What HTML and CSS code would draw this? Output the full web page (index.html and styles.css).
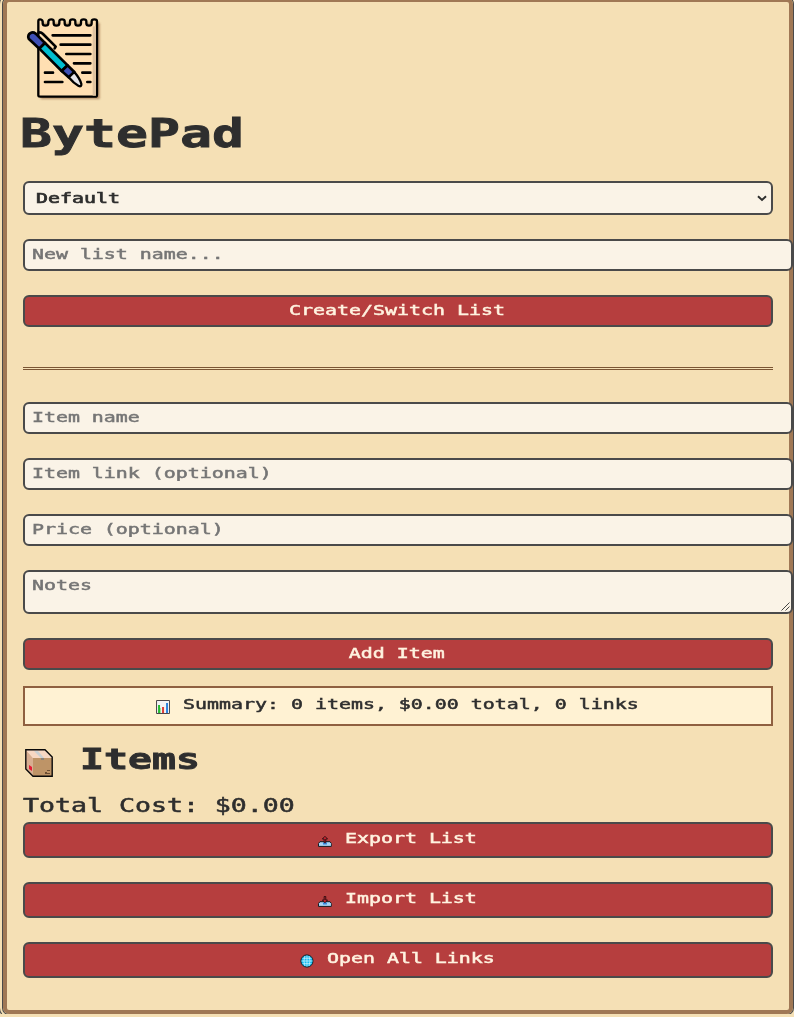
FILE: index.html
```html
<!DOCTYPE html>
<html lang="en">
<head>
<meta charset="utf-8">
<title>BytePad</title>
<link rel="stylesheet" href="styles.css">
</head>
<body>
<main class="pad">
  <svg class="logo" viewBox="69 48 240 258" aria-hidden="true">
    <path class="shadow" d="M115 63H292V291H115Z"/>
    <path class="paper" d="M115 286V64Q115 58 120 58Q126 58 128 64V70Q128 77 136 77Q145 77 145 70V64Q146 58 154 58Q161 58 161 64V70Q161 77 169 77Q178 77 178 70V64Q178 58 186 58Q194 58 194 64V70Q194 77 202 77Q210 77 210 70V64Q210 58 218 58Q226 58 226 64V70Q226 77 234 77Q243 77 243 70V64Q243 58 251 58Q259 58 259 64V70Q259 77 267 77Q275 77 275 70V64Q275 58 283 58Q291 58 291 64V284Q291 290 285 290H121Q115 290 115 286Z"/>
    <path class="fold" d="M278 79H288V287H278Z"/>
    <path class="rule" d="M158 106H271M182 134H271M199 162H271M222 190H271M247 218H271M135 218H159M135 246H187M262 246H271"/>
    <path class="clip" d="M116 98Q122 95 129 102L167 140L164 145"/>
    <path class="navy" d="M86 116Q82 104 92 99Q99 95 107 101L135 129L118 146Z"/>
    <path class="teal" d="M118 146L135 129L203 196L185 213Z"/>
    <path class="navy" d="M185 213L203 196L223 216L206 232Z"/>
    <path class="tip" d="M206 232L223 216Q240 236 244 252Q245 261 236 258Q221 250 206 232Z"/>
  </svg>
  <h1><span class="wide">BytePad</span></h1>

  <div class="field select"><select class="wide"><option>Default</option></select>
    <svg class="chevron" viewBox="0 0 10 7"><path d="M1 1.3L5 5L9 1.3"/></svg></div>
  <div class="field over"><input class="wide" placeholder="New list name..."></div>
  <button><span class="wide">Create/Switch List</span></button>
  <hr>
  <div class="field over"><input class="wide" placeholder="Item name"></div>
  <div class="field over"><input class="wide" placeholder="Item link (optional)"></div>
  <div class="field over"><input class="wide" placeholder="Price (optional)"></div>
  <div class="field over notes"><textarea class="wide" placeholder="Notes"></textarea>
    <svg class="grip" viewBox="0 0 9 9"><path d="M0.5 8.5L8.5 0.5M4.5 8.5L8.5 4.5"/></svg></div>
  <button class="add"><span class="wide">Add Item</span></button>

  <div class="summary"><span class="wide"><svg class="icon" viewBox="0 0 14 14" preserveAspectRatio="none"><path fill="#f2f2f5" stroke="#4b4548" d="M.5.5h13v13H.5z"/><path fill="#25bd32" d="M2 5h2v8H2z"/><path fill="#9be29a" d="M4 8h1v5H4z"/><path fill="#de3d36" d="M6 7h2v6H6z"/><path fill="#2b80dc" d="M10 3h2v10h-2z"/></svg>Summary: 0 items, $0.00 total, 0 links</span></div>

  <h2><svg class="box" viewBox="0 0 28 28"><path fill="#d8ae91" d="M1 1L8 9V27L1 20Z"/><path fill="#f7d7c3" d="M1 1H20L27 9H8Z"/><path fill="#be9467" d="M8 9H27V27H8Z"/><path fill="#cbd0d2" d="M9 2H13L19 9V11H16V9Z"/><path fill="#8d8379" d="M16 9h3v2h-3z"/><path fill="#e51c35" d="M4 16l3 2v4l-3-2z"/><path fill="#6a4d32" d="M22 21h3v1h-3zM20 23h2v1h-2zM20 24h5v1h-5z"/><path fill="none" stroke="#090909" stroke-width="1.4" d="M.8.8H20L27.2 8V27.2H8L.8 20Z"/></svg><span class="wide">Items</span></h2>
  <p class="total"><span class="wide">Total Cost: $0.00</span></p>

  <div class="actions">
    <button><span class="wide"><svg class="icon" viewBox="0 0 14 14" preserveAspectRatio="none"><path fill="#a9d5f4" stroke="#15191f" d="M2 7.7H12L13.5 9.5V12.4H.5V9.5Z"/><path fill="#3486db" d="M5 8.5h4v2H5z"/><path fill="#d32733" stroke="#260c10" stroke-width=".9" d="M6.2 8.7V5H4.4L7 2.3L9.6 5H7.8V8.7Z"/></svg>Export List</span></button>
    <button><span class="wide"><svg class="icon" viewBox="0 0 14 14" preserveAspectRatio="none"><path fill="#a9d5f4" stroke="#15191f" d="M2 7.7H12L13.5 9.5V12.4H.5V9.5Z"/><path fill="#3486db" d="M5 8.5h4v2H5z"/><path fill="#d32733" stroke="#260c10" stroke-width=".9" d="M6.2 2.5H7.8V6H9.6L7 8.8L4.4 6H6.2Z"/></svg>Import List</span></button>
    <button><span class="wide"><svg class="icon" viewBox="0 0 14 14" preserveAspectRatio="none"><circle cx="7" cy="7" r="6.1" fill="#12b9ef" stroke="#10262e"/><path fill="none" stroke="#c4f0fc" stroke-width=".8" d="M7 1.5v11M1.5 7h11M2.6 4.3h8.8M2.6 9.7h8.8M5 2Q2.8 7 5 12M9 2Q11.2 7 9 12"/></svg>Open All Links</span></button>
  </div>
</main>
</body>
</html>
```
FILE: styles.css
```css
:root {
  --ink: #2e2e2e;
  --line: #4a4a4a;
  --cream: #f5e0b5;
  --paper: #faf3e7;
  --stretch: 1.384;
}
* { box-sizing: border-box; }
html { overflow: hidden; }
body {
  margin: 0;
  background: var(--cream);
  color: var(--ink);
  font-family: "DejaVu Sans Mono", monospace;
  font-size: 14.4px;
  overflow: hidden;
}
.pad {
  width: 790px;
  height: 1016px;
  margin: -2px 0 0 3px;
  padding: 12px 16px 16px;
  border: 4px solid #a07855;
  border-radius: 6px;
  box-shadow: 0 0 0 1px var(--line), 0 0 0 3px var(--cream), 0 0 0 4px var(--line);
  display: flex;
  flex-direction: column;
}
.wide {
  display: inline-block;
  transform: scaleX(var(--stretch));
  transform-origin: left center;
  white-space: pre;
  -webkit-text-stroke: 0.5px currentColor;
}
.logo { width: 80px; height: 86px; margin-top: 2px; flex: none; }
.logo path { stroke-linecap: round; stroke-linejoin: round; }
.logo .shadow { fill: #a87d57; transform: translate(7px, 6px); filter: blur(3px); opacity: .85; }
.logo .paper { fill: #ffdfb2; stroke: #000; stroke-width: 7; }
.logo .fold { fill: #dfc3a0; }
.logo .rule { fill: none; stroke: #000; stroke-width: 8; }
.logo .clip { fill: none; stroke: #000; stroke-width: 8; }
.logo .navy { fill: #3f50b5; stroke: #000; stroke-width: 8; }
.logo .teal { fill: #00bdd0; stroke: #000; stroke-width: 8; }
.logo .tip { fill: #e4e4e8; stroke: #000; stroke-width: 7; }

h1, h2, p { margin: 0; }
h1 { height: 79px; font-size: 38.4px; line-height: 64px; margin-left: -3px; }
h2 { height: 56px; margin-top: 5px; display: flex; gap: 27px; font-size: 28.8px; line-height: 56px; }
h1 .wide, h2 .wide { -webkit-text-stroke-width: 0.8px; }
.box { width: 28px; height: 28px; margin: 18px 0 0 2px; }
.total { height: 35px; font-size: 19.2px; line-height: 37px; }

.field {
  position: relative;
  height: 32px;
  flex: none;
  margin-bottom: 24px;
  background: var(--paper);
  border: 2px solid var(--line);
  border-radius: 6px;
  overflow: hidden;
}
.over { width: 770px; }
.select { height: 34px; }
.notes { height: 44px; }
.field .wide {
  display: block;
  width: calc(100% / var(--stretch));
  height: 100%;
  margin: 0;
  padding: 0 0 2px 5px;
  border: 0;
  outline: 0;
  appearance: none;
  resize: none;
  background: transparent;
  color: var(--ink);
  font: inherit;
}
.field select.wide { padding: 0 0 0 8px; -webkit-text-stroke-width: 0.7px; }
.notes textarea.wide { padding-top: 5px; overflow: hidden; }
.wide::placeholder { color: #757575; opacity: 1; }
.chevron { position: absolute; right: 4px; top: 12px; width: 10px; height: 7px; }
.chevron path { fill: none; stroke: var(--ink); stroke-width: 2; }
.grip { position: absolute; right: 1px; bottom: 1px; width: 9px; height: 9px; }
.grip path { stroke: #444; stroke-width: 1; }

button {
  flex: none;
  display: flex;
  align-items: center;
  justify-content: center;
  width: 100%;
  height: 32px;
  padding: 0 2px 2px 0;
  background: #b63e3e;
  border: 2px solid var(--line);
  border-radius: 6px;
  color: #fff3e0;
  font: inherit;
}
button .wide, .summary .wide { transform-origin: center; }
hr {
  width: 100%;
  height: 3px;
  margin: 40px 0 32px;
  border: 0;
  border-top: 3px double #7a5533;
  flex: none;
}
.add { margin-bottom: 16px; }
.summary {
  flex: none;
  height: 40px;
  display: flex;
  align-items: center;
  justify-content: center;
  padding: 0 2px 4px 0;
  background: #fff2d3;
  border: 2px solid #8f6040;
}
.icon {
  position: relative;
  top: 1px;
  width: calc(14px / var(--stretch));
  height: 14px;
  margin-right: calc(13px / var(--stretch));
  vertical-align: -4px;
}
.actions { display: grid; gap: 24px; }
.actions button { height: 36px; padding-bottom: 3px; }
```
